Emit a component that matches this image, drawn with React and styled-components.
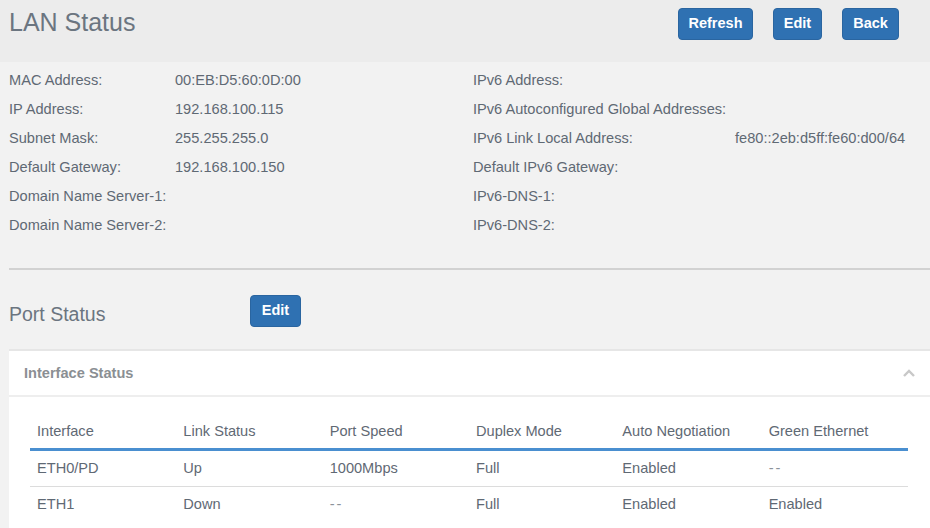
import styled, { createGlobalStyle } from "styled-components";

const GlobalStyle = createGlobalStyle`
  html, body {
    margin: 0;
    padding: 0;
    background: #f2f2f2;
    font-family: "Liberation Sans", Arial, sans-serif;
    color: #5f6974;
  }
  body {
    overflow: hidden;
  }
`;

const Page = styled.div`
  width: 930px;
  height: 528px;
  overflow: hidden;
  background: #f2f2f2;
`;

const Header = styled.header`
  height: 62px;
  background: #ececec;
  display: flex;
  align-items: flex-start;
  justify-content: space-between;
  padding: 0 31px 0 9px;
  box-sizing: border-box;
`;

const Title = styled.h1`
  margin: 8px 0 0;
  font-size: 25px;
  font-weight: normal;
  color: #6b7580;
  line-height: 28px;
`;

const ButtonGroup = styled.div`
  display: flex;
  gap: 20px;
  margin-top: 8px;
`;

const Button = styled.button`
  justify-self: start;
  height: 32px;
  width: ${(p) => p.$width || 50}px;
  padding: 0 0 3px;
  border: 1px solid #2a65a0;
  border-radius: 4px;
  background: #2f71b2;
  color: #fff;
  font-family: inherit;
  font-size: 14.5px;
  font-weight: bold;
  cursor: pointer;
  box-sizing: border-box;
`;

const InfoGrid = styled.div`
  display: grid;
  grid-template-columns: 464px 457px;
  padding: 4px 0 0 9px;
`;

const InfoColumn = styled.div`
  display: flex;
  flex-direction: column;
`;

const InfoRow = styled.div`
  display: grid;
  grid-template-columns: ${(p) => p.$label}px 1fr;
  height: 29px;
  align-items: center;
  font-size: 14.6px;
  white-space: nowrap;
  padding-bottom: 1px;
  box-sizing: border-box;
`;

const Divider = styled.hr`
  margin: 28px 0 0 9px;
  border: none;
  border-top: 2px solid #d2d2d2;
`;

const SectionHead = styled.div`
  display: grid;
  grid-template-columns: 241px auto;
  align-items: center;
  padding: 25px 0 0 9px;
  height: 31px;
`;

const SectionTitle = styled.h2`
  margin: 6px 0 0;
  font-size: 19.5px;
  font-weight: normal;
  color: #6b7580;
`;

const Card = styled.section`
  margin: 23px 0 0 9px;
  background: #fff;
  border-top: 2px solid #e6e6e6;
`;

const CardHeader = styled.div`
  height: 44px;
  display: flex;
  align-items: center;
  justify-content: space-between;
  padding: 0 14px 0 15px;
  border-bottom: 2px solid #eeeeee;
  font-size: 14.6px;
  font-weight: bold;
  color: #8b8f93;
`;

const CardBody = styled.div`
  padding: 18px 22px 10px 21px;
`;

const Table = styled.table`
  width: 878px;
  border-collapse: collapse;
  table-layout: fixed;
  font-size: 14.6px;
`;

const Th = styled.th`
  text-align: left;
  font-weight: normal;
  height: 32px;
  padding: 0 0 1px 7px;
  border-bottom: 3px solid #4a8fd0;
  color: #5f6974;
`;

const Td = styled.td`
  height: 34px;
  padding: 0 0 1px 7px;
  border-bottom: ${(p) => (p.$last ? "none" : "1px solid #dcdcdc")};
  color: ${(p) => (p.$dash ? "#8c939a" : "#5f6974")};
  letter-spacing: ${(p) => (p.$dash ? "2px" : "normal")};
`;

const left = [
  ["MAC Address:", "00:EB:D5:60:0D:00"],
  ["IP Address:", "192.168.100.115"],
  ["Subnet Mask:", "255.255.255.0"],
  ["Default Gateway:", "192.168.100.150"],
  ["Domain Name Server-1:", ""],
  ["Domain Name Server-2:", ""],
];

const right = [
  ["IPv6 Address:", ""],
  ["IPv6 Autoconfigured Global Addresses:", ""],
  ["IPv6 Link Local Address:", "fe80::2eb:d5ff:fe60:d00/64"],
  ["Default IPv6 Gateway:", ""],
  ["IPv6-DNS-1:", ""],
  ["IPv6-DNS-2:", ""],
];

const columns = [
  "Interface",
  "Link Status",
  "Port Speed",
  "Duplex Mode",
  "Auto Negotiation",
  "Green Ethernet",
];

const rows = [
  ["ETH0/PD", "Up", "1000Mbps", "Full", "Enabled", "--"],
  ["ETH1", "Down", "--", "Full", "Enabled", "Enabled"],
];

function ChevronUp() {
  return (
    <svg width="14" height="10" viewBox="0 0 14 10">
      <path d="M2 8 L7 3 L12 8" fill="none" stroke="#c8c8c8" strokeWidth="2.4" />
    </svg>
  );
}

export default function App() {
  return (
    <Page>
      <GlobalStyle />
      <Header>
        <Title>LAN Status</Title>
        <ButtonGroup>
          <Button $width={75}>Refresh</Button>
          <Button $width={49}>Edit</Button>
          <Button $width={57}>Back</Button>
        </ButtonGroup>
      </Header>
      <InfoGrid>
        <InfoColumn>
          {left.map(([l, v]) => (
            <InfoRow key={l} $label={166}>
              <span>{l}</span>
              <span>{v}</span>
            </InfoRow>
          ))}
        </InfoColumn>
        <InfoColumn>
          {right.map(([l, v]) => (
            <InfoRow key={l} $label={262}>
              <span>{l}</span>
              <span>{v}</span>
            </InfoRow>
          ))}
        </InfoColumn>
      </InfoGrid>
      <Divider />
      <SectionHead>
        <SectionTitle>Port Status</SectionTitle>
        <Button $width={51}>Edit</Button>
      </SectionHead>
      <Card>
        <CardHeader>
          <span>Interface Status</span>
          <ChevronUp />
        </CardHeader>
        <CardBody>
          <Table>
            <thead>
              <tr>
                {columns.map((c) => (
                  <Th key={c}>{c}</Th>
                ))}
              </tr>
            </thead>
            <tbody>
              {rows.map((r, i) => (
                <tr key={r[0]}>
                  {r.map((cell, j) => (
                    <Td key={j} $last={i === rows.length - 1} $dash={cell === "--"}>
                      {cell}
                    </Td>
                  ))}
                </tr>
              ))}
            </tbody>
          </Table>
        </CardBody>
      </Card>
    </Page>
  );
}
